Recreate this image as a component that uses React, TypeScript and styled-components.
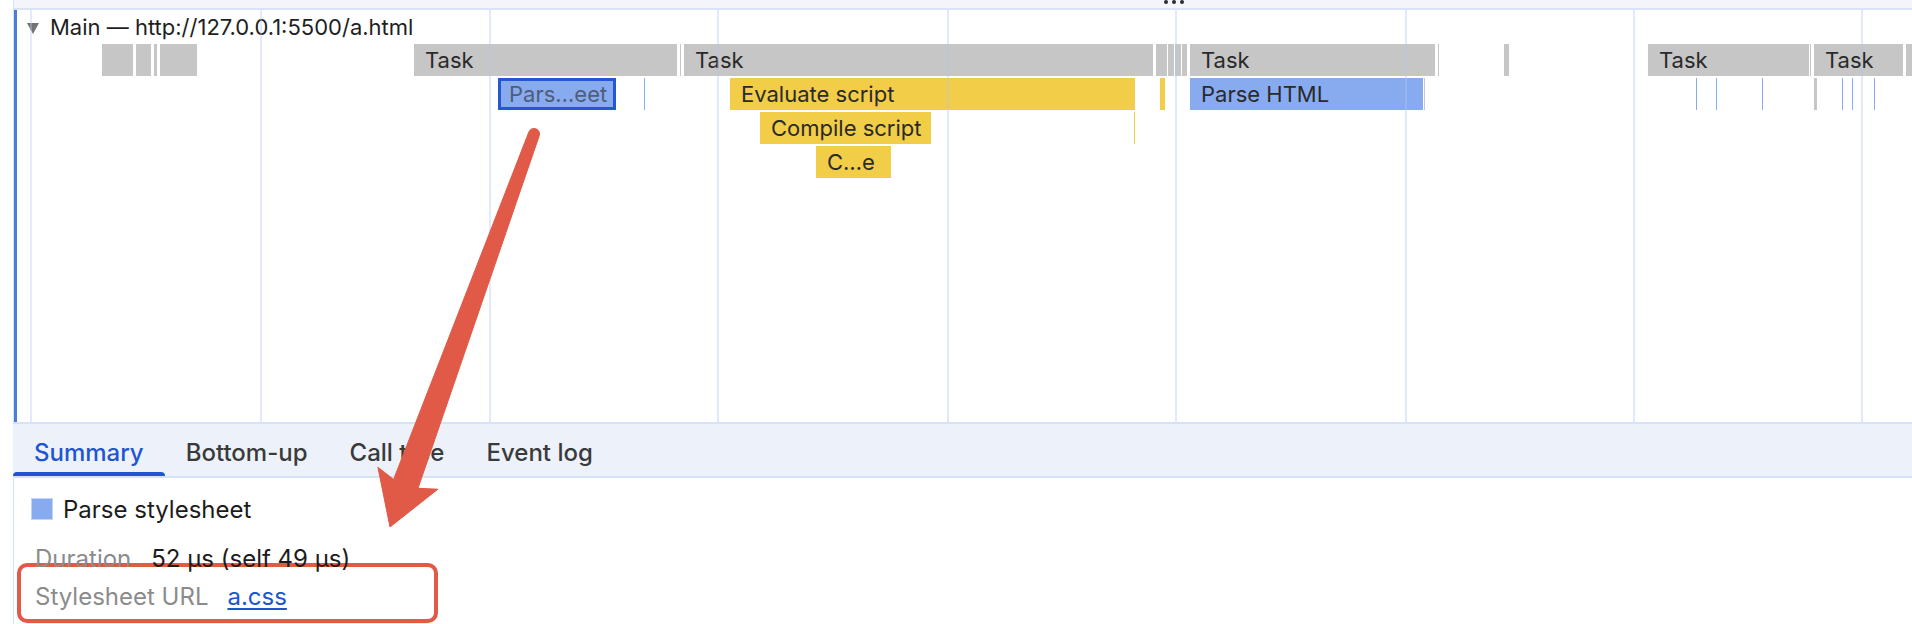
import React from "react";
import styled, { createGlobalStyle } from "styled-components";

const GlobalStyle = createGlobalStyle`
  html, body { margin: 0; padding: 0; background: #ffffff; }
  body { font-family: Inter, "Liberation Sans", sans-serif; -webkit-font-smoothing: antialiased; }
  #root { width: 1912px; height: 624px; }
`;

const ORIGIN = 17; // page x where the timeline content begins

type Kind = "gray" | "yellow" | "blue";
type Bar = { row: number; x1: number; x2: number; kind: Kind; label?: string; selected?: boolean };

const BARS: Bar[] = [
  { row: 0, x1: 102, x2: 133, kind: "gray" },
  { row: 0, x1: 136, x2: 151, kind: "gray" },
  { row: 0, x1: 154, x2: 157, kind: "gray" },
  { row: 0, x1: 160, x2: 197, kind: "gray" },
  { row: 0, x1: 414, x2: 677, kind: "gray", label: "Task" },
  { row: 0, x1: 680, x2: 681, kind: "gray" },
  { row: 0, x1: 684, x2: 1153, kind: "gray", label: "Task" },
  { row: 0, x1: 1156, x2: 1167, kind: "gray" },
  { row: 0, x1: 1168, x2: 1174, kind: "gray" },
  { row: 0, x1: 1175, x2: 1181, kind: "gray" },
  { row: 0, x1: 1182, x2: 1187, kind: "gray" },
  { row: 0, x1: 1190, x2: 1435, kind: "gray", label: "Task" },
  { row: 0, x1: 1438, x2: 1439, kind: "gray" },
  { row: 0, x1: 1504, x2: 1509, kind: "gray" },
  { row: 0, x1: 1648, x2: 1809, kind: "gray", label: "Task" },
  { row: 0, x1: 1810, x2: 1811, kind: "gray" },
  { row: 0, x1: 1814, x2: 1903, kind: "gray", label: "Task" },
  { row: 0, x1: 1906, x2: 1914, kind: "gray" },

  { row: 1, x1: 498, x2: 616, kind: "blue", label: "Pars…eet", selected: true },
  { row: 1, x1: 644, x2: 645, kind: "blue" },
  { row: 1, x1: 730, x2: 1135, kind: "yellow", label: "Evaluate script" },
  { row: 1, x1: 1160, x2: 1165, kind: "yellow" },
  { row: 1, x1: 1190, x2: 1423, kind: "blue", label: "Parse HTML" },
  { row: 1, x1: 1424, x2: 1425, kind: "gray" },
  { row: 1, x1: 1696, x2: 1697, kind: "blue" },
  { row: 1, x1: 1716, x2: 1717, kind: "blue" },
  { row: 1, x1: 1762, x2: 1763, kind: "blue" },
  { row: 1, x1: 1814, x2: 1817, kind: "gray" },
  { row: 1, x1: 1842, x2: 1843, kind: "blue" },
  { row: 1, x1: 1852, x2: 1853, kind: "blue" },
  { row: 1, x1: 1874, x2: 1875, kind: "blue" },

  { row: 2, x1: 760, x2: 931, kind: "yellow", label: "Compile script" },
  { row: 2, x1: 1134, x2: 1135, kind: "yellow" },

  { row: 3, x1: 816, x2: 891, kind: "yellow", label: "C…e" },
];

const GRID = [30, 260, 489, 717, 947, 1175, 1405, 1633, 1861];

const COLORS: Record<Kind, string> = {
  gray: "#c6c6c6",
  yellow: "#f2cd48",
  blue: "#88abf0",
};

const TABS = ["Summary", "Bottom-up", "Call tree", "Event log"];

const Page = styled.div`
  position: relative;
  width: 1912px;
  height: 624px;
  overflow: hidden;
  display: flex;
  background: #ffffff;
`;

const Gutter = styled.div`
  width: 13px;
  flex: none;
`;

const Panel = styled.div`
  flex: 1;
  min-width: 0;
  display: flex;
  flex-direction: column;
  border-left: 1px solid #d6e2f8;
`;

const TopBar = styled.div`
  flex: none;
  height: 8px;
  background: #f3f5fb;
  border-bottom: 2px solid #d8e3f8;
  display: flex;
  align-items: flex-start;
  gap: 4px;
  padding-left: 1150px;
`;

const Dot = styled.span`
  width: 4px;
  height: 4px;
  border-radius: 50%;
  background: #2b2b2b;
`;

const Timeline = styled.div`
  position: relative;
  flex: none;
  height: 412px;
  border-left: 3px solid #4a7fd6;
  display: flex;
  flex-direction: column;
`;

const GridLayer = styled.div`
  position: absolute;
  inset: 0;
  pointer-events: none;
  z-index: 2;
`;

const GridLine = styled.div`
  position: absolute;
  top: 0;
  bottom: 0;
  width: 2px;
  background: rgba(178, 198, 240, 0.38);
`;

const TrackHeader = styled.div`
  flex: none;
  height: 34px;
  display: flex;
  align-items: center;
  gap: 11px;
  padding-left: 10px;
  font-size: 22px;
  color: #1e1e1e;
`;

const Caret = styled.span`
  width: 0;
  height: 0;
  border-left: 6px solid transparent;
  border-right: 6px solid transparent;
  border-top: 11px solid #737373;
  margin-top: 2px;
`;

const Flames = styled.div`
  position: relative;
  flex: 1;
`;

const FlameBar = styled.div<{ $kind: Kind; $selected?: boolean }>`
  position: absolute;
  height: 32px;
  box-sizing: border-box;
  background: ${(p) => COLORS[p.$kind]};
  border: ${(p) => (p.$selected ? "3px solid #2557d3" : "none")};
  padding-left: ${(p) => (p.$selected ? "8px" : "11px")};
  font-size: 22px;
  line-height: ${(p) => (p.$selected ? "26px" : "32px")};
  color: ${(p) => (p.$selected ? "#4f5d78" : "#2a2a2a")};
  white-space: nowrap;
  overflow: hidden;
`;

const TabBar = styled.div`
  flex: none;
  height: 52px;
  margin-left: -1px;
  display: flex;
  background: #edf2fa;
  border-top: 2px solid #d6e2f8;
  border-bottom: 2px solid #d6e2f8;
`;

const Tab = styled.div<{ $active?: boolean }>`
  position: relative;
  display: flex;
  align-items: center;
  padding: 4px 21px 0;
  font-size: 24px;
  font-weight: 500;
  color: ${(p) => (p.$active ? "#1f55d0" : "#3a3a3a")};

  &::after {
    content: "";
    display: ${(p) => (p.$active ? "block" : "none")};
    position: absolute;
    left: 0;
    right: 0;
    bottom: 0;
    height: 4px;
    border-radius: 4px 4px 0 0;
    background: #1f55d0;
  }
`;

const Details = styled.div`
  flex: 1;
  padding: 20px 0 0 17px;
  display: flex;
  flex-direction: column;
`;

const TitleRow = styled.div`
  display: flex;
  align-items: center;
  gap: 10px;
  height: 22px;
  font-size: 24px;
  color: #1c1c1c;
  margin-bottom: 21px;
`;

const Swatch = styled.span`
  width: 22px;
  height: 22px;
  box-sizing: border-box;
  background: #88abf0;
  border: 1px solid #c3d3f5;
`;

const InfoRow = styled.div<{ $height: number; $gap: number }>`
  position: relative;
  display: flex;
  gap: ${(p) => p.$gap}px;
  height: ${(p) => p.$height}px;
  align-items: center;
  padding-left: 4px;
  font-size: 24px;
`;

const Label = styled.span`
  position: relative;
  z-index: 1;
  color: #8b8b8b;
`;

const Value = styled.span`
  position: relative;
  z-index: 1;
  color: #1c1c1c;
`;

const Link = styled.a`
  position: relative;
  z-index: 1;
  color: #1b56cf;
  text-decoration: underline;
  text-underline-offset: 3px;
  text-decoration-thickness: 2px;
`;

const AnnotationFrame = styled.div`
  position: absolute;
  left: -14px;
  top: -13px;
  width: 421px;
  height: 60px;
  box-sizing: border-box;
  border: 4px solid #e05a47;
  border-radius: 10px;
  background: #ffffff;
  z-index: 0;
`;

const ArrowLayer = styled.svg`
  position: absolute;
  left: 0;
  top: 0;
  z-index: 20;
  pointer-events: none;
`;

export default function App() {
  return (
    <>
      <GlobalStyle />
      <Page>
        <Gutter />
        <Panel>
          <TopBar>
            <Dot />
            <Dot />
            <Dot />
          </TopBar>
          <Timeline>
            <TrackHeader>
              <Caret />
              <span>Main — http://127.0.0.1:5500/a.html</span>
            </TrackHeader>
            <Flames>
              {BARS.map((b, i) => (
                <FlameBar
                  key={i}
                  $kind={b.kind}
                  $selected={b.selected}
                  style={{
                    left: b.x1 - ORIGIN,
                    width: b.x2 - b.x1,
                    top: b.row * 34,
                    paddingLeft: b.label ? undefined : 0,
                  }}
                >
                  {b.label}
                </FlameBar>
              ))}
            </Flames>
            <GridLayer>
              {GRID.map((x) => (
                <GridLine key={x} style={{ left: x - ORIGIN }} />
              ))}
            </GridLayer>
          </Timeline>
          <TabBar>
            {TABS.map((t, i) => (
              <Tab key={t} $active={i === 0}>
                {t}
              </Tab>
            ))}
          </TabBar>
          <Details>
            <TitleRow>
              <Swatch />
              <span>Parse stylesheet</span>
            </TitleRow>
            <InfoRow $height={35} $gap={20}>
              <Label>Duration</Label>
              <Value>52 μs (self 49 μs)</Value>
            </InfoRow>
            <InfoRow $height={40} $gap={19}>
              <AnnotationFrame />
              <Label>Stylesheet URL</Label>
              <Link href="#">a.css</Link>
            </InfoRow>
          </Details>
        </Panel>
        <ArrowLayer width="1912" height="624" viewBox="0 0 1912 624">
          <path
            d="M 528.8 132.1 L 393.6 479.4 L 377.9 467.2 L 390 527 L 437.9 489.2 L 418 488.3 L 539.2 135.9 A 5.5 5.5 0 0 0 528.8 132.1 Z"
            fill="#e05a47"
            stroke="#e05a47"
            strokeWidth="1"
            strokeLinejoin="round"
          />
        </ArrowLayer>
      </Page>
    </>
  );
}
